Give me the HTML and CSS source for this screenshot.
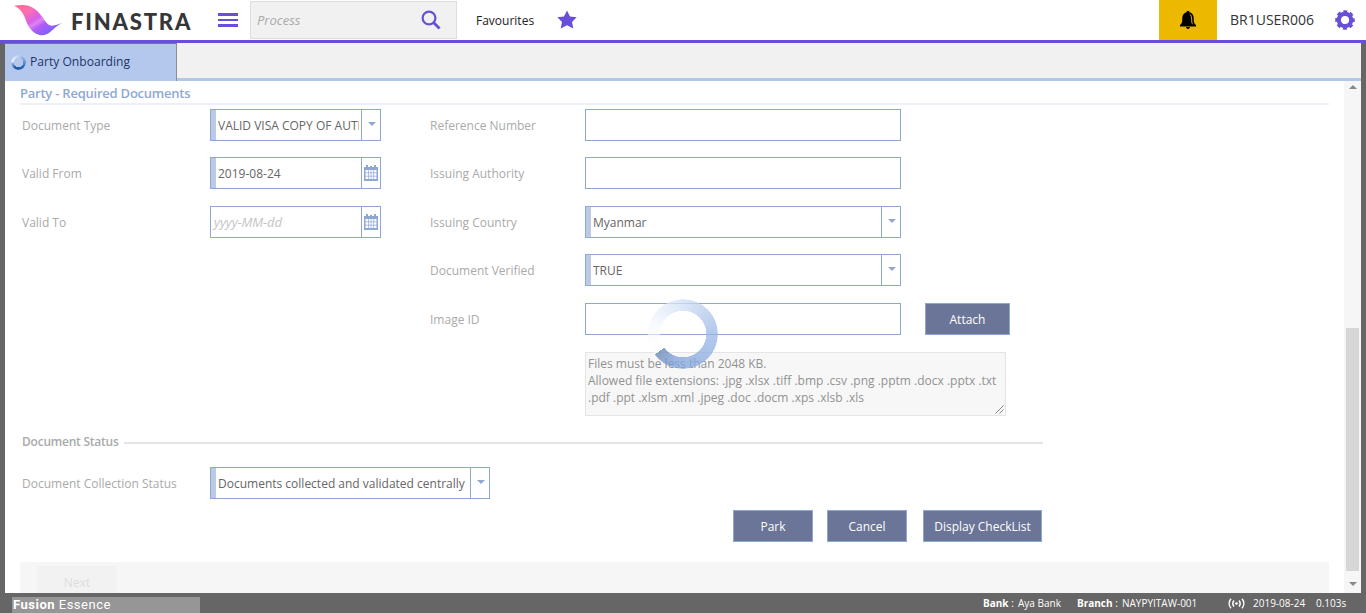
FILE: index.html
```html
<!DOCTYPE html>
<html lang="en">
<head>
<meta charset="utf-8">
<title>Party Onboarding</title>
<link rel="stylesheet" href="styles.css">
</head>
<body>
<svg width="0" height="0" class="defs" aria-hidden="true">
  <symbol id="calendar" viewBox="0 0 14 16">
    <path fill="#8ea8d4" d="M0 2h14v14H0zM2 0h2v3H2zM10 0h2v3h-2zM6 1h2v2H6z"/>
    <path fill="#fff" d="M1.500 5H4v2.500H1.500zM4.700 5h2v2.500h-2zM7.400 5h2v2.500h-2zM10.100 5h2.400v2.500h-2.400zM1.500 8.300H4v2.500H1.500zM4.700 8.300h2v2.500h-2zM7.400 8.300h2v2.500h-2zM10.100 8.300h2.400v2.500h-2.400zM1.500 11.600H4v2.500H1.500zM4.700 11.600h2v2.500h-2zM7.400 11.600h2v2.500h-2zM10.100 11.600h2.400v2.500h-2.400z"/>
  </symbol>
</svg>
<header class="topbar">
  <svg class="logo" width="48" height="36" viewBox="0 0 48 36">
    <defs><linearGradient id="lg" x1="0" y1="0" x2="1" y2="1">
      <stop offset="0" stop-color="#ff6a8c"/><stop offset=".25" stop-color="#fb70b0"/><stop offset=".45" stop-color="#d65fe8"/><stop offset=".53" stop-color="#df82f5"/><stop offset=".62" stop-color="#b35cf5"/><stop offset="1" stop-color="#5068ff"/>
    </linearGradient></defs>
    <path fill="url(#lg)" d="M0 3.800C5 2.800 11 2.800 15 4c7 2.200 11 7.500 15 13.500 3.500 5 6 7 9.500 6 3-.6 5.500-1.500 8.500-2.500-5 3-7.500 5-11.500 8.800-3 2.800-7 3.900-11 3.100-6-1.300-10.500-7-13-13C10 13 7 6.500 0 3.800z"/>
  </svg>
  <span class="brand">FINASTRA</span>
  <span class="burger"><i></i><i></i><i></i></span>
  <div class="search"><span>Process</span>
    <svg width="20" height="20" viewBox="0 0 20 20" fill="none" stroke="#694ed6"><circle cx="8" cy="8" r="6.400" stroke-width="2.200"/><path d="M12.500 12.500l6 6" stroke-width="2.800"/></svg>
  </div>
  <span class="fav">Favourites</span>
  <svg class="star" width="20" height="20" viewBox="0 0 20 20"><path fill="#694ed6" d="M10 .5l3 6 6.700.7-4.700 4.700 1.300 6.500L10 15.300l-6.300 3.100L5 11.900.3 7.200 7 6.500z"/></svg>
  <div class="bell"><svg width="16" height="18" viewBox="0 0 16 18"><path d="M8 0c1 0 1.500.5 1.500 1.300 2.600.6 4.200 2.500 4.200 5.700 0 4 .3 5.500 2.300 7v1.500H0V14c2-1.500 2.300-3 2.300-7 0-3.200 1.600-5.100 4.200-5.700C6.500.5 7 0 8 0zM6 16h4c-.3 1.200-1 2-2 2s-1.700-.8-2-2z"/><path d="M9.700 3.200c1.500 1 2 3 2 5.500 0 2 .2 3.300.8 4.500" fill="none" stroke="#edb800"/></svg></div>
  <span class="user">BR1USER006</span>
  <svg class="gear" width="20" height="20" viewBox="0 0 20 20"><g fill="none" stroke="#694ed6"><circle cx="10" cy="10" r="6.200" stroke-width="4.200"/><circle cx="10" cy="10" r="8.600" stroke-width="2.400" stroke-dasharray="3.900 2.854" stroke-dashoffset="1.950"/></g></svg>
</header>
<main class="workspace">
  <nav class="tabs"><div class="tab"><span class="ring small"></span><span class="tabname">Party Onboarding</span></div></nav>
  <div class="view">
    <section class="content">
      <h1 class="title">Party - Required Documents</h1>
      <div class="form">
        <label>Document Type</label>
        <div class="field short req"><span class="val">VALID VISA COPY OF AUTH</span><span class="btn arrow"></span></div>
        <label>Reference Number</label>
        <div class="field"></div><span></span>

        <label>Valid From</label>
        <div class="field short req"><span class="val">2019-08-24</span><span class="btn"><svg width="14" height="16"><use href="#calendar"/></svg></span></div>
        <label>Issuing Authority</label>
        <div class="field"></div><span></span>

        <label>Valid To</label>
        <div class="field short"><span class="val hint">yyyy-MM-dd</span><span class="btn"><svg width="14" height="16"><use href="#calendar"/></svg></span></div>
        <label>Issuing Country</label>
        <div class="field req"><span class="val">Myanmar</span><span class="btn arrow"></span></div><span></span>

        <span></span><span></span>
        <label>Document Verified</label>
        <div class="field req"><span class="val">TRUE</span><span class="btn arrow"></span></div><span></span>

        <span></span><span></span>
        <label>Image ID</label>
        <div class="field image"><span class="ring large"></span></div>
        <div class="action attach">Attach</div>

        <div class="note">Files must be less than 2048 KB.<br>Allowed file extensions: .jpg .xlsx .tiff .bmp .csv .png .pptm .docx .pptx .txt<br>.pdf .ppt .xlsm .xml .jpeg .doc .docm .xps .xlsb .xls
          <svg class="grip" width="9" height="9" viewBox="0 0 9 9" stroke="#888"><path d="M.5 8.500l8-8M4.500 8.500l4-4"/></svg></div>
      </div>
      <div class="legend">Document Status</div>
      <div class="status"><label>Document Collection Status</label>
        <div class="field wide req"><span class="val">Documents collected and validated centrally</span><span class="btn arrow"></span></div></div>
      <div class="actions"><div class="action">Park</div><div class="action">Cancel</div><div class="action check">Display CheckList</div></div>
      <div class="wizard"><div class="next">Next</div></div>
    </section>
    <div class="scroll"><i class="up"></i><i class="thumb"></i><i class="down"></i></div>
  </div>
</main>
<footer class="footer">
  <div class="product"><b>Fusion</b> Essence</div>
  <span class="bank"><b>Bank</b> :</span><span class="bankname">Aya Bank</span>
  <span class="branch"><b>Branch</b> :</span><span class="branchname">NAYPYITAW-001</span>
  <svg class="signal" width="17" height="11" viewBox="0 0 17 11" fill="none" stroke="#fff" stroke-width="1.500"><path d="M3 .7C.6 3.500.6 7.500 3 10.300M6 2.500c-1.600 2-1.600 4 0 6M14 .7c2.400 2.800 2.400 6.800 0 9.600M11 2.500c1.600 2 1.600 4 0 6"/><circle cx="8.500" cy="5.500" r="1.300" fill="#fff" stroke="none"/></svg>
  <span class="date">2019-08-24</span><span class="time">0.103s</span>
</footer>
</body>
</html>
```
FILE: styles.css
```css
* { box-sizing: border-box; }
body { margin: 0; height: 613px; overflow: hidden; display: flex; flex-direction: column; background: #666; font: 12px/16px "Open Sans", sans-serif; color: #666; }
.defs { position: absolute; }
.topbar { height: 43px; flex: none; display: flex; align-items: center; background: #fff; border-bottom: 3px solid #694ed6; color: #222; white-space: nowrap; }
.logo { margin-left: 14px; flex: none; }
.brand { width: 156px; flex: none; padding-left: 9px; margin-top: 3px; font: 900 22px/26px Lato, sans-serif; letter-spacing: 1.8px; color: #363636; }
.burger { width: 20px; height: 14px; display: flex; flex-direction: column; justify-content: space-between; }
.burger i { height: 2.600px; background: #694ed6; }
.search { width: 207px; height: 38px; margin-left: 12px; padding: 0 15px 0 6px; display: flex; align-items: center; justify-content: space-between; background: #f1f1f1; border: 1px solid #ddd; color: #aaa; font-style: italic; font-size: 13px; }
.fav { width: 81px; margin-left: 19px; padding-top: 1px; }
.bell { width: 58px; height: 40px; margin-left: 582px; display: flex; align-items: center; justify-content: center; background: #edb800; }
.user { width: 105px; padding-left: 13px; font-size: 14px; color: #333; }
.gear { margin-left: 13px; }
.workspace { flex: none; height: 550px; margin: 0 5px; background: #fff; }
.tabs { height: 38px; background: #f1f1f1; border-bottom: 3px solid #b1c7e8; }
.tab { width: 172px; height: 38px; padding-left: 6px; display: flex; align-items: center; gap: 4px; background: #b4c8ee; border-right: 1px solid #8d8d8d; border-top: 1px solid #777; color: #223466; }
.tabname { margin-top: -1px; font-size: 12.100px; }
.ring { border-radius: 50%; }
.small { width: 15px; height: 15px; background: conic-gradient(from 280deg, #e9f1fc, #c5d7f3 20%, #7fa3dd 40%, #2d67b4 60%, #1c56a4 80%, #7fa3dd 94%, #e9f1fc); -webkit-mask: radial-gradient(circle, transparent 4.500px, #000 5px); mask: radial-gradient(circle, transparent 4.500px, #000 5px); }
.view { height: 512px; display: flex; }
.content { width: 1309px; margin: 0 15px; overflow: hidden; }
.title { margin: 0; height: 24px; border-bottom: 2px solid #ecf0f7; font-size: 13px; line-height: 24px; font-weight: 600; letter-spacing: -.23px; color: #8fa8d2; }
.form { margin: 4px 0 0 2px; display: grid; grid-template-columns: 188px 220px 155px 340px 85px; grid-template-rows: 48px 49px 48px 49px 49px 64px; align-items: start; }
label { line-height: 34px; height: 32px; color: #aaa; }
.field { width: 316px; height: 32px; display: flex; border: 1px solid #8ea8d4; background: #fff; line-height: 32px; white-space: nowrap; }
.short { width: 171px; }
.wide { width: 280px; }
.req { box-shadow: inset 5px 0 #bccae5; }
.val { flex: 1; min-width: 0; height: 30px; margin-right: 2px; padding-left: 3px; overflow: hidden; }
.req .val { margin-left: 7px; padding: 0; }
.hint { color: #c4c4c4; font-style: italic; font-size: 13px; line-height: 30px; letter-spacing: -.1px; }
.btn { width: 19px; flex: none; border-left: 1px solid #8ea8d4; display: flex; align-items: center; justify-content: center; }
.arrow::before { content: ""; border: 4.500px solid transparent; border-top-color: #8ea8d4; border-bottom: 0; margin: 0 0 2px 1px; }
.image { position: relative; }
.large { position: absolute; z-index: 1; left: 62px; top: -5px; width: 70px; height: 70px; background: conic-gradient(from 234deg, rgba(255,255,255,.35), rgba(246,249,254,.75) 15%, rgba(206,221,245,.75) 36%, rgba(155,183,231,.76) 60%, rgba(125,162,219,.76) 90%, rgba(100,131,178,.76)); -webkit-mask: radial-gradient(circle, transparent 23px, #000 23.500px); mask: radial-gradient(circle, transparent 23px, #000 23.500px); }
.action { width: 80px; height: 32px; border: 1px solid #8ea8d4; background: #6b7597; color: #fff; font-weight: 500; line-height: 32px; text-align: center; }
.attach { width: 85px; }
.note { grid-column: 4 / 6; width: 421px; height: 64px; position: relative; padding: 2px; background: #f7f7f7; border: 1px solid #e5e5e5; color: #929292; line-height: 17px; white-space: nowrap; }
.grip { position: absolute; right: 1px; bottom: 1px; }
.legend { width: 1021px; margin: 17px 0 0 2px; height: 17px; display: flex; align-items: center; gap: 5px; font-weight: 600; letter-spacing: -.23px; color: #aaa; }
.legend::after { content: ""; flex: 1; height: 2px; margin-top: 2px; background: #e4e4e4; }
.status { display: flex; margin: 17px 0 0 2px; }
.status label { width: 188px; }
.actions { display: flex; margin: 11px 0 0 713px; gap: 14px; }
.check { width: 119px; margin-left: 2px; }
.wizard { margin-top: 20px; height: 31px; padding: 4px 17px 0; background: #f6f6f6; }
.next { width: 80px; height: 32px; background: #f2f2f2; line-height: 34px; text-align: center; color: #ddd; font-weight: 500; }
.scroll { width: 17px; display: flex; flex-direction: column; align-items: center; background: #f6f6f6; }
.up { border: 4px solid transparent; border-bottom-color: #888; border-top: 0; margin-top: 4px; }
.thumb { width: 13px; height: 243px; margin-top: 239px; background: #d6d6d6; }
.down { border: 4px solid transparent; border-top-color: #888; border-bottom: 0; margin-top: 11px; }
.footer { height: 20px; display: flex; align-items: center; color: #fff; font-size: 10px; font-weight: 500; line-height: 19px; white-space: nowrap; }
.product { width: 188px; height: 16px; margin: 4px 0 0 12px; padding-left: 1px; background: #969696; font: 13px/15px Roboto, sans-serif; letter-spacing: .5px; }
.bank { margin-left: 783px; width: 35px; }
.bankname { width: 59px; }
.branch { width: 45px; }
.branchname { width: 106px; }
.date { margin-left: 8px; width: 63px; }
```
